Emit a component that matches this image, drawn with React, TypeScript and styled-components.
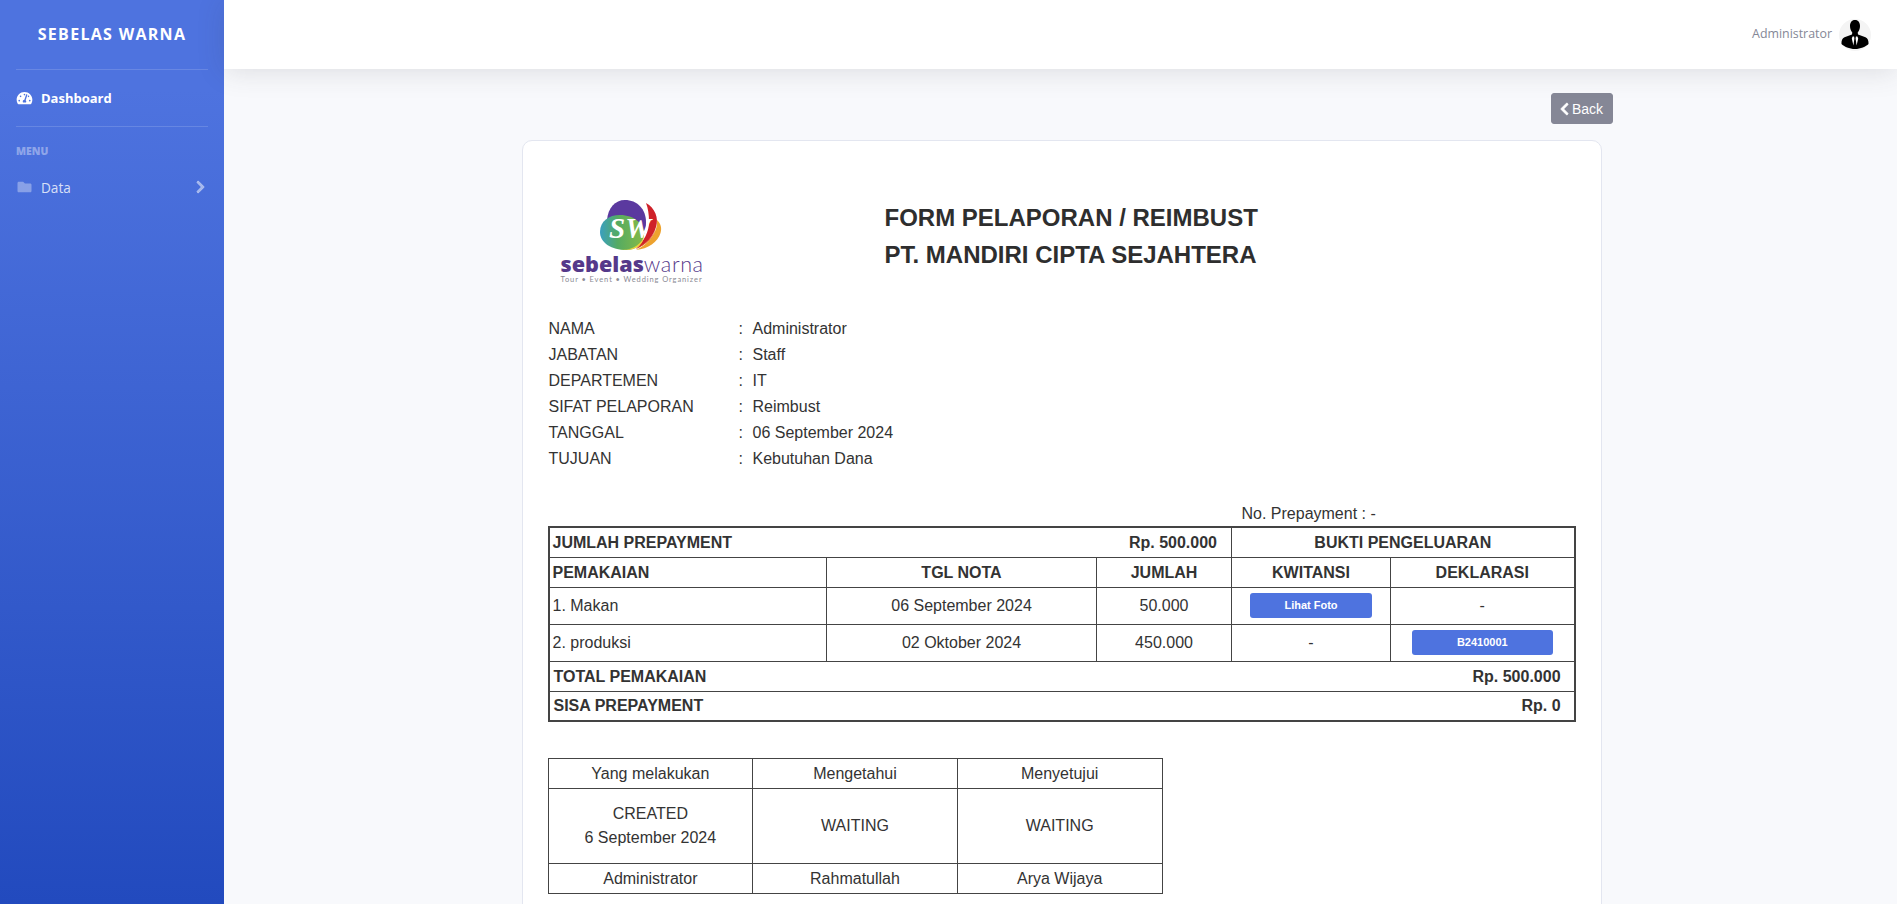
import React from "react";
import styled, { createGlobalStyle } from "styled-components";
import { FaChevronLeft, FaChevronRight, FaFolder, FaTachometerAlt } from "react-icons/fa";

const GlobalStyle = createGlobalStyle`
  html, body {
    margin: 0;
    height: 100%;
    overflow: hidden;
    background: #f8f9fc;
    font-family: "Liberation Sans", Arial, sans-serif;
  }
  #root { height: 100%; }
  * { box-sizing: border-box; }
`;

const Wrapper = styled.div`
  display: flex;
  height: 100vh;
  overflow: hidden;
`;

const Sidebar = styled.aside`
  flex: 0 0 224px;
  display: flex;
  flex-direction: column;
  padding: 0 16px;
  background: linear-gradient(180deg, #4e73df 10%, #224abe 100%);
  font-family: "Open Sans", "Noto Sans", sans-serif;
`;

const Brand = styled.div`
  height: 67px;
  margin-bottom: 2px;
  display: flex;
  align-items: center;
  justify-content: center;
  color: #fff;
  font-size: 16px;
  font-weight: 700;
  letter-spacing: 1.3px;
  text-transform: uppercase;
  white-space: nowrap;
`;

const Divider = styled.hr`
  margin: 0;
  border: 0;
  border-top: 1px solid rgba(255, 255, 255, 0.15);
`;

const NavItem = styled.a<{ $active?: boolean }>`
  height: ${(p) => (p.$active ? "56px" : "48px")};
  display: flex;
  align-items: center;
  gap: 8px;
  font-size: ${(p) => (p.$active ? "13px" : "13.6px")};
  font-weight: ${(p) => (p.$active ? 700 : 400)};
  color: ${(p) => (p.$active ? "#fff" : "rgba(255, 255, 255, 0.8)")};

  > svg:first-child {
    width: 17px;
    height: 14px;
    color: ${(p) => (p.$active ? "#fff" : "rgba(255, 255, 255, 0.35)")};
  }
`;

const NavChevron = styled(FaChevronRight)`
  margin-left: auto;
  margin-right: 3px;
  width: 9px;
  height: 14px;
  color: rgba(255, 255, 255, 0.5);
  stroke: currentColor;
  stroke-width: 24px;
`;

const SideHeading = styled.div`
  padding-top: 18px;
  height: 36px;
  color: rgba(255, 255, 255, 0.4);
  font-size: 10.4px;
  font-weight: 800;
  line-height: 12px;
`;

const Main = styled.div`
  flex: 1;
  min-width: 0;
  display: flex;
  flex-direction: column;
`;

const Topbar = styled.header`
  flex: 0 0 69px;
  display: flex;
  align-items: center;
  justify-content: flex-end;
  gap: 7px;
  padding-right: 26px;
  background: #fff;
  box-shadow: 0 2.4px 28px 0 rgba(58, 59, 69, 0.15);
  position: relative;
  z-index: 1;
`;

const UserName = styled.span`
  color: #858796;
  font-family: "Open Sans", "Noto Sans", sans-serif;
  font-size: 12.4px;
  margin-top: -3px;
`;

const Avatar = styled.svg`
  width: 32px;
  height: 32px;
  display: block;
`;

const Content = styled.main`
  flex: 1;
  display: flex;
  justify-content: center;
  padding: 24px 0 0 13px;
`;

const Column = styled.div`
  width: 1091px;
  display: flex;
  flex-direction: column;
  align-items: flex-end;
`;

const BackButton = styled.button`
  height: 31px;
  width: 62px;
  margin-bottom: 16px;
  padding: 0;
  display: flex;
  align-items: center;
  justify-content: center;
  gap: 3px;
  border: 1px solid #858796;
  border-radius: 3px;
  background: #858796;
  color: #fff;
  font-family: "Liberation Sans", Arial, sans-serif;
  font-size: 14px;

  svg {
    width: 9px;
    height: 14px;
    stroke: currentColor;
    stroke-width: 24px;
  }
`;

const Card = styled.section`
  align-self: flex-start;
  width: 1080px;
  height: 900px;
  padding: 40px 25px 0;
  background: #fff;
  border: 1px solid #e3e6f0;
  border-radius: 10px;
  color: #333;
  font-size: 16px;
`;

const Header = styled.div`
  display: flex;
  height: 127px;
`;

const LogoBox = styled.div`
  width: 337px;
  padding: 19px 0 0 13px;
`;

const LogoWord = styled.div`
  display: flex;
  width: 142px;
  height: 20px;
  color: #55398a;
  font-family: "Open Sans", sans-serif;
  font-size: 21.6px;
  line-height: 20px;
`;

const LogoBold = styled.span`
  font-weight: 800;
`;

const LogoLight = styled.span`
  font-weight: 300;
  font-family: Lato, sans-serif;
  letter-spacing: 0.6px;
`;

const LogoTagline = styled.div`
  margin-top: 1px;
  color: #8b8b95;
  font-family: Lato, sans-serif;
  font-size: 7.5px;
  line-height: 9px;
  letter-spacing: 0.9px;
  white-space: nowrap;
`;

const Emblem = styled.svg`
  display: block;
  width: 62px;
  height: 50px;
  margin: 0 0 4px 39px;
`;

const Title = styled.h1`
  margin: 0;
  padding-top: 18px;
  color: #2e2e2e;
  font-size: 24px;
  font-weight: 700;
  line-height: 37px;
`;

const FormList = styled.dl`
  display: grid;
  grid-template-columns: 190px 14px 1fr;
  grid-auto-rows: 26px;
  align-items: center;
  margin: 0 0 33px;
  padding: 8px 0 0 1px;
  height: 163px;
`;

const FormCell = styled.dd`
  margin: 0;
`;

const FormLabel = styled.dt`
  margin: 0;
`;

const PrepaymentNo = styled.div`
  height: 22px;
  padding-left: 694px;
  line-height: 20px;
`;

const ReportTable = styled.table`
  width: 1026px;
  table-layout: fixed;
  border-collapse: collapse;
  border: 2px solid #444;
  margin-bottom: 36px;

  td, th {
    border: 1px solid #444;
    padding: 0;
    text-align: center;
    font-size: 16px;
    line-height: 20px;
  }
`;

const Cell = styled.td<{ $bold?: boolean; $align?: string; $tall?: boolean; $open?: boolean; $summary?: boolean }>`
  height: ${(p) => (p.$tall ? "37px" : "30px")};
  font-weight: ${(p) => (p.$bold ? 700 : 400)};
  && {
    text-align: ${(p) => p.$align || "center"};
    padding-top: ${(p) => (p.$tall ? "0" : "1px")};
    padding-left: ${(p) => (p.$align === "left" ? (p.$summary ? "4px" : "3px") : "0")};
    padding-right: ${(p) => (p.$align === "right" ? (p.$summary ? "13px" : "14px") : "0")};
    ${(p) => p.$open && (p.$align === "left" ? "border-right: 0;" : "border-left: 0;")}
  }
`;

const ProofButton = styled.a`
  display: block;
  width: 77%;
  height: 25px;
  margin: 0 auto;
  border-radius: 3px;
  background: #4e73df;
  color: #fff;
  font-size: 11px;
  font-weight: 700;
  line-height: 25px;
`;

const SignTable = styled.table`
  width: 615px;
  table-layout: fixed;
  border-collapse: collapse;

  td {
    border: 1px solid #444;
    height: 30px;
    padding: 0;
    text-align: center;
    font-size: 16px;
    line-height: 24px;
  }
`;

const SignStatus = styled.td`
  && { height: 75px; }
`;

function EmblemLogo() {
  return (
    <Emblem viewBox="0 0 62 50">
      <defs>
        <linearGradient id="greenSwirl" x1="0" x2="1" y1="0" y2="0">
          <stop offset="0" stopColor="#3a9fc0" />
          <stop offset="0.4" stopColor="#55ab62" />
          <stop offset="1" stopColor="#86ba45" />
        </linearGradient>
      </defs>
      <path d="M36 50C48 49 58 42 60.500 33 62 28 61 24 57 20 58 32 49 44 36 50Z" fill="#eda22e" />
      <path d="M46 3C55 8 59 18 56 27 53 37 46 45 36 49 44 41 49 32 49 22 49 14 48 8 46 3Z" fill="#cf2129" />
      <path d="M42 45C48 41 53 36 55.500 29 54 37 47 44 36 49Z" fill="#e2622c" />
      <path d="M7 20C8 8 15 0 25 0 37 0 46 9 46 22 46 30 44 36 40 42L7 20Z" fill="#5b399f" />
      <path d="M0 32C0 21 9 15 20 15 34 15 44 24 44 33 44 44 36 50 26 50 12 50 0 43 0 32Z" fill="url(#greenSwirl)" />
      <path d="M21 50C30 50 39 47 44 37 43 42 40 46 36 48 31 50 26 50 21 50Z" fill="#e9d23a" />
      <text x="9" y="38" fill="#fff" fontFamily="'Liberation Serif', serif" fontStyle="italic" fontWeight="700" fontSize="29">
        SW
      </text>
    </Emblem>
  );
}

function AvatarIcon() {
  return (
    <Avatar viewBox="0 0 32 32">
      <circle cx="16" cy="16" r="16" fill="#f4f4f4" />
      <path d="M16 1c3.400 0 5 2.700 5 6 0 2.600-1 5-2.300 6.400l.3 2 7.500 2.800c2.300 1 3.200 3.500 3 6.800C27 27.500 21.500 30 16 30S5 27.500 2.500 25c-.2-3.300.7-5.800 3-6.800l7.500-2.800.3-2C12 12 11 9.600 11 7c0-3.300 1.600-6 5-6z" fill="#000" />
      <path d="M13.600 17.500h1.500l.3 2-1 7-1.600-7zM18.400 17.500h-1.500l-.3 2 1 7 1.600-7z" fill="#fff" />
    </Avatar>
  );
}

const formRows = [
  ["NAMA", "Administrator"],
  ["JABATAN", "Staff"],
  ["DEPARTEMEN", "IT"],
  ["SIFAT PELAPORAN", "Reimbust"],
  ["TANGGAL", "06 September 2024"],
  ["TUJUAN", "Kebutuhan Dana"],
];

export default function App() {
  return (
    <Wrapper>
      <GlobalStyle />
      <Sidebar>
        <Brand>Sebelas Warna</Brand>
        <Divider />
        <NavItem $active>
          <FaTachometerAlt />
          Dashboard
        </NavItem>
        <Divider />
        <SideHeading>MENU</SideHeading>
        <NavItem>
          <FaFolder />
          Data
          <NavChevron />
        </NavItem>
      </Sidebar>
      <Main>
        <Topbar>
          <UserName>Administrator</UserName>
          <AvatarIcon />
        </Topbar>
        <Content>
          <Column>
            <BackButton>
              <FaChevronLeft />
              Back
            </BackButton>
            <Card>
              <Header>
                <LogoBox>
                  <EmblemLogo />
                  <LogoWord>
                    <LogoBold>sebelas</LogoBold>
                    <LogoLight>warna</LogoLight>
                  </LogoWord>
                  <LogoTagline>Tour • Event • Wedding Organizer</LogoTagline>
                </LogoBox>
                <Title>
                  FORM PELAPORAN / REIMBUST
                  <br />
                  PT. MANDIRI CIPTA SEJAHTERA
                </Title>
              </Header>
              <FormList>
                {formRows.map(([label, value]) => (
                  <React.Fragment key={label}>
                    <FormLabel>{label}</FormLabel>
                    <FormCell>:</FormCell>
                    <FormCell>{value}</FormCell>
                  </React.Fragment>
                ))}
              </FormList>
              <PrepaymentNo>No. Prepayment : -</PrepaymentNo>
              <ReportTable>
                <colgroup>
                  <col width="278" />
                  <col width="270" />
                  <col width="135" />
                  <col width="159" />
                  <col width="184" />
                </colgroup>
                <tbody>
                  <tr>
                    <Cell $bold $open $align="left" colSpan={2}>JUMLAH PREPAYMENT</Cell>
                    <Cell $bold $open $align="right">Rp. 500.000</Cell>
                    <Cell $bold colSpan={2}>BUKTI PENGELUARAN</Cell>
                  </tr>
                  <tr>
                    <Cell $bold $align="left">PEMAKAIAN</Cell>
                    <Cell $bold>TGL NOTA</Cell>
                    <Cell $bold>JUMLAH</Cell>
                    <Cell $bold>KWITANSI</Cell>
                    <Cell $bold>DEKLARASI</Cell>
                  </tr>
                  <tr>
                    <Cell $tall $align="left">1. Makan</Cell>
                    <Cell $tall>06 September 2024</Cell>
                    <Cell $tall>50.000</Cell>
                    <Cell $tall><ProofButton>Lihat Foto</ProofButton></Cell>
                    <Cell $tall>-</Cell>
                  </tr>
                  <tr>
                    <Cell $tall $align="left">2. produksi</Cell>
                    <Cell $tall>02 Oktober 2024</Cell>
                    <Cell $tall>450.000</Cell>
                    <Cell $tall>-</Cell>
                    <Cell $tall><ProofButton>B2410001</ProofButton></Cell>
                  </tr>
                  <tr>
                    <Cell $bold $open $summary $align="left" colSpan={2}>TOTAL PEMAKAIAN</Cell>
                    <Cell $bold $open $summary $align="right" colSpan={3}>Rp. 500.000</Cell>
                  </tr>
                  <tr>
                    <Cell $bold $open $summary $align="left" colSpan={2}>SISA PREPAYMENT</Cell>
                    <Cell $bold $open $summary $align="right" colSpan={3}>Rp. 0</Cell>
                  </tr>
                </tbody>
              </ReportTable>
              <SignTable>
                <tbody>
                  <tr>
                    <td>Yang melakukan</td>
                    <td>Mengetahui</td>
                    <td>Menyetujui</td>
                  </tr>
                  <tr>
                    <SignStatus>CREATED<br />6 September 2024</SignStatus>
                    <SignStatus>WAITING</SignStatus>
                    <SignStatus>WAITING</SignStatus>
                  </tr>
                  <tr>
                    <td>Administrator</td>
                    <td>Rahmatullah</td>
                    <td>Arya Wijaya</td>
                  </tr>
                </tbody>
              </SignTable>
            </Card>
          </Column>
        </Content>
      </Main>
    </Wrapper>
  );
}
